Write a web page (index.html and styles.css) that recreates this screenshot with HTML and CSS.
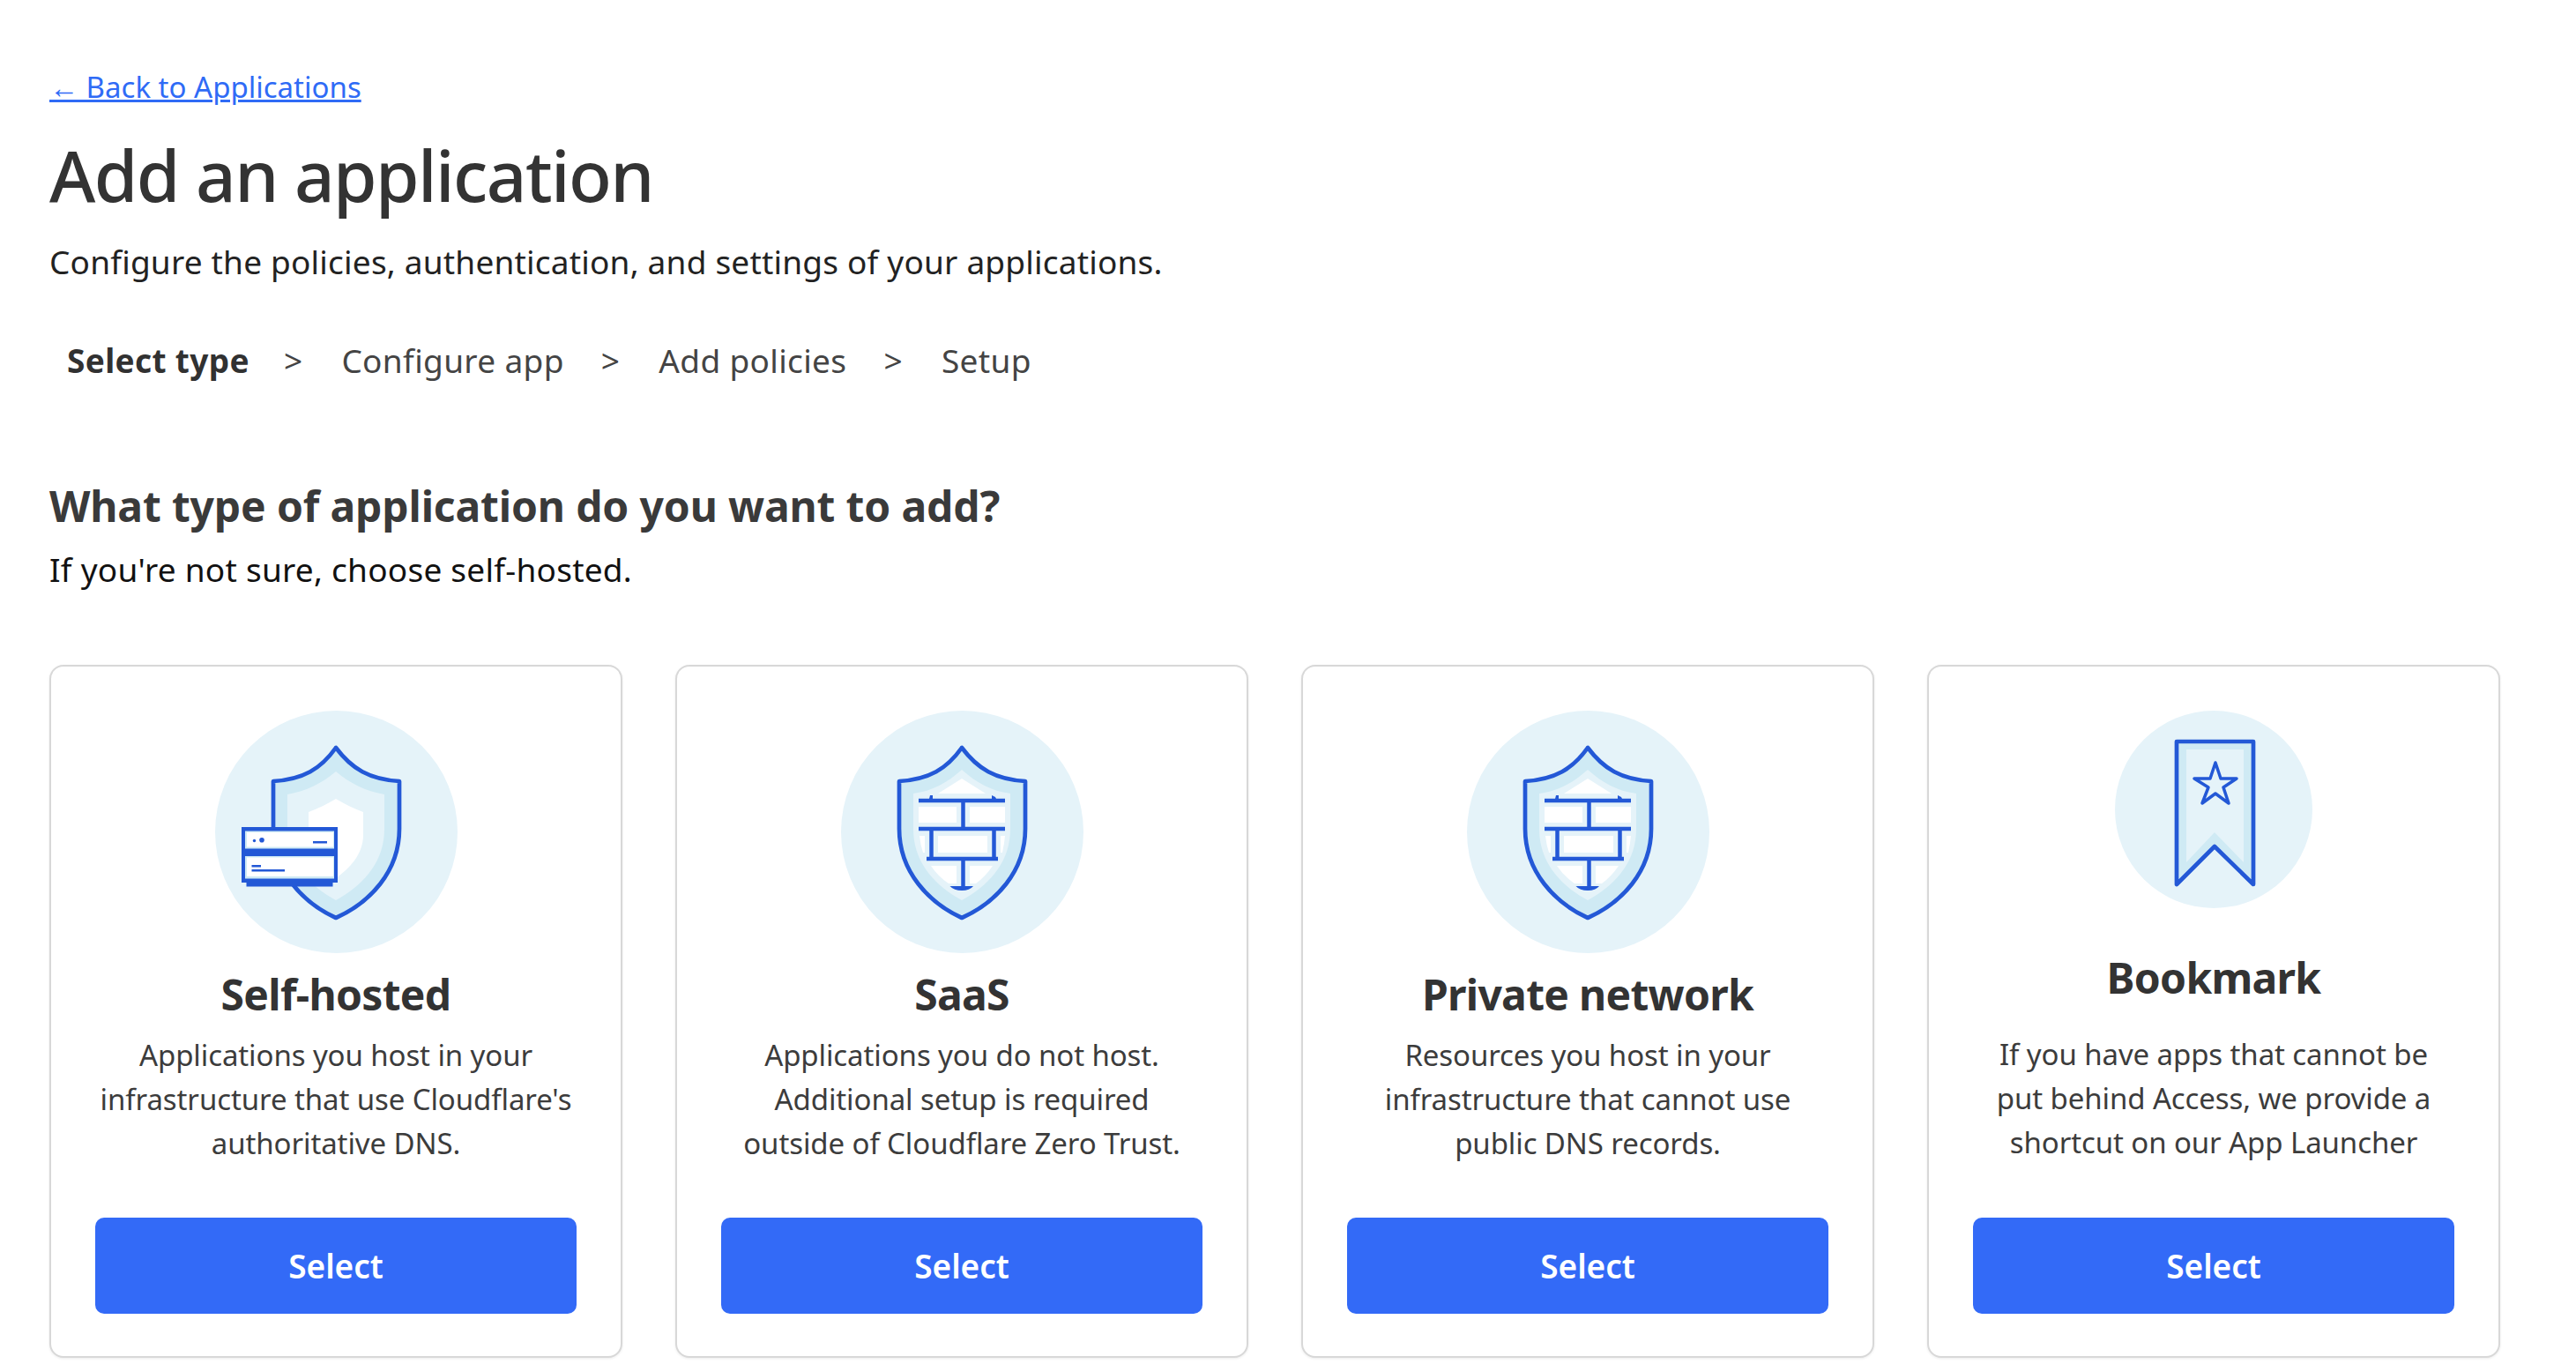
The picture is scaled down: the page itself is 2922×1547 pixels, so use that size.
FILE: index.html
```html
<!DOCTYPE html>
<html lang="en">
<head>
<meta charset="utf-8">
<title>Add an application</title>
<link rel="stylesheet" href="styles.css">
</head>
<body>
<main class="page">
  <a class="back" href="#">← Back to Applications</a>
  <h1 class="title">Add an application</h1>
  <p class="lead">Configure the policies, authentication, and settings of your applications.</p>
  <nav class="steps">
    <span class="step step-active">Select type</span>
    <span class="sep">&gt;</span>
    <span class="step">Configure app</span>
    <span class="sep">&gt;</span>
    <span class="step">Add policies</span>
    <span class="sep">&gt;</span>
    <span class="step">Setup</span>
  </nav>
  <h2 class="question">What type of application do you want to add?</h2>
  <p class="hint">If you're not sure, choose self-hosted.</p>
  <section class="cards">
    <article class="card">
      <svg class="icon" viewBox="0 0 275 275" aria-hidden="true">
        <circle class="c-bg" cx="137.5" cy="137.5" r="137.5"/>
        <path class="c-band c-line" d="M137 42C120 66 100 78 66 80V134C66 183 100 218 137 235C175 218 209 183 209 134V80C175 78 155 66 137 42Z"/>
        <path class="c-bg" d="M137 69C120 83 104 91 82 95V134C82 172 106 198 137 215C168 198 192 172 192 134V95C170 91 154 83 137 69Z"/>
        <path class="c-white" d="M137 100C127 106 117 111 106 115V141C106 162 120 178 137 190C154 178 168 162 168 141V115C157 111 147 106 137 100Z"/>
        <rect class="c-fill" x="30" y="132" width="109" height="63"/>
        <rect class="c-fill" x="35.5" y="195" width="98" height="4.5"/>
        <rect class="c-band" x="34" y="136.500" width="101" height="20"/>
        <rect class="c-band" x="34" y="165" width="101" height="25.500"/>
        <rect class="c-white" x="36" y="138" width="98" height="16.500"/>
        <rect class="c-white" x="36" y="166.500" width="98" height="21.500"/>
        <circle class="c-fill" cx="44.500" cy="147.500" r="1.700"/>
        <circle class="c-fill" cx="53" cy="146.800" r="2.800"/>
        <rect class="c-fill" x="111" y="148" width="16" height="2.500"/>
        <rect class="c-fill" x="41.500" y="175" width="10.500" height="2.500"/>
        <rect class="c-fill" x="41.500" y="180" width="37.500" height="2.500"/>
      </svg>
      <h3 class="card-title">Self-hosted</h3>
      <p class="card-text">Applications you host in your infrastructure that use Cloudflare's authoritative DNS.</p>
      <button class="select" type="button">Select</button>
    </article>
    <article class="card">
      <svg class="icon" viewBox="0 0 275 275" aria-hidden="true">
        <use href="#brick-shield"/>
      </svg>
      <h3 class="card-title">SaaS</h3>
      <p class="card-text">Applications you do not host. Additional setup is required outside of Cloudflare Zero Trust.</p>
      <button class="select" type="button">Select</button>
    </article>
    <article class="card">
      <svg class="icon" viewBox="0 0 275 275" aria-hidden="true">
        <use href="#brick-shield"/>
      </svg>
      <h3 class="card-title">Private network</h3>
      <p class="card-text">Resources you host in your infrastructure that cannot use public DNS records.</p>
      <button class="select" type="button">Select</button>
    </article>
    <article class="card">
      <svg class="icon icon-small" viewBox="0 0 224 224" aria-hidden="true">
        <circle class="c-bg" cx="112" cy="112" r="112"/>
        <path class="c-band c-line" d="M70 35H157V197L113 154L70 197Z"/>
        <path class="c-bg" d="M81 44H146V172L113 138L81 172Z"/>
        <path class="c-star" d="M114 59L120 77H138L123 87L129 105L114 94L99 105L106 87L90 77H108Z"/>
      </svg>
      <h3 class="card-title card-title-small">Bookmark</h3>
      <p class="card-text">If you have apps that cannot be put behind Access, we provide a shortcut on our App Launcher</p>
      <button class="select" type="button">Select</button>
    </article>
  </section>
</main>
<svg class="defs" width="0" height="0" aria-hidden="true">
  <defs>
    <g id="brick-shield">
      <circle class="c-bg" cx="137.5" cy="137.5" r="137.5"/>
      <path class="c-band c-line" d="M137 42C120 66 100 78 66 80V134C66 183 100 218 137 235C175 218 209 183 209 134V80C175 78 155 66 137 42Z"/>
      <path class="c-bg" d="M137 67C120 82 104 91 82 94V134C82 172 106 198 137 215C168 198 192 172 192 134V94C170 91 154 82 137 67Z"/>
      <path class="c-white" d="M137 77L110 94H164Z"/>
      <rect class="c-white" x="88" y="109" width="43" height="18"/>
      <rect class="c-white" x="146" y="109" width="40" height="18"/>
      <rect class="c-white" x="110" y="142" width="56" height="19"/>
      <path class="c-white" d="M89 142H95V161H93Q90 152 89 142Z"/>
      <path class="c-white" d="M181 142H186Q185 152 183 161H181Z"/>
      <path class="c-white" d="M102 176H131V196H122Q110 188 102 176Z"/>
      <path class="c-white" d="M146 176H172Q164 188 153 196H146Z"/>
      <path class="c-thin" d="M88 102H186M138.500 102V134M88 134H186M102.500 134V168M173.500 134V168M97 168H178M138.500 168V201"/>
      <path class="c-fill" d="M123.500 199H150Q146 204 137 204Q128 204 123.500 199Z"/>
      <path class="c-fill" d="M100 100L101 96H104V100ZM171 100V96L175 98L176 100Z"/>
    </g>
  </defs>
</svg>
</body>
</html>
```
FILE: styles.css
```css
* { box-sizing: border-box; }
html, body { margin: 0; background: #fff; }
body { font-family: "Noto Sans", "Open Sans", sans-serif; color: #313131; overflow: hidden; }
.page { padding: 76px 86px 0 56px; height: 1547px; }
.back { display: block; width: max-content; color: #2f6bf6; font-size: 33px; line-height: 46px; letter-spacing: 0; }
.title { margin: 21px 0 0; font-size: 80px; line-height: 110px; font-weight: 500; color: #333; letter-spacing: -1.6px; }
.lead { margin: 19px 0 0; font-size: 37px; line-height: 50px; color: #222; letter-spacing: 0.2px; }
.steps { display: flex; align-items: center; margin: 62px 0 0; padding-left: 20px; font-size: 37px; line-height: 50px; letter-spacing: 0.35px; color: #444; }
.step { display: block; }
.step-active { font-weight: 700; color: #313131; margin-right: -3px; }
.sep { margin: 0 44px 0 42px; }
.question { margin: 107px 0 0; font-size: 48px; line-height: 66px; font-weight: 700; color: #3a3a3a; letter-spacing: -0.15px; }
.hint { margin: 14px 0 0; font-size: 37px; line-height: 50px; color: #111; letter-spacing: 0.25px; }
.cards { display: grid; grid-template-columns: repeat(4, 650px); column-gap: 60px; margin-top: 83px; }
.card { height: 786px; display: flex; flex-direction: column; align-items: center; padding: 50px 51px 0; border: 2px solid #d8d8d8; border-radius: 16px; background: #fff; box-shadow: 0 1px 3px rgba(0,0,0,.08); }
.icon { display: block; flex: none; width: 275px; height: 275px; }
.icon-small { width: 224px; height: 224px; }
.card-title { margin: 14px 0 0; font-size: 48px; line-height: 66px; font-weight: 700; color: #333; letter-spacing: -0.7px; }
.card-title-small { margin-top: 46px; }
.card-text { margin: 11px 0 0; text-align: center; font-size: 33px; line-height: 50px; color: #3c3c3c; letter-spacing: -0.1px; }
.card-title-small + .card-text { margin-top: 29px; }
.select { width: 546px; height: 109px; margin-top: auto; margin-bottom: 48px; border: 0; border-radius: 10px; background: #336af7; color: #fff; font: 600 37px/50px "Noto Sans", "Open Sans", sans-serif; letter-spacing: 0; }
.defs { position: absolute; }
.c-bg { fill: #e5f3f9; }
.c-band { fill: #cfeaf4; }
.c-white { fill: #fff; }
.c-fill { fill: #2358d6; }
.c-line { stroke: #2358d6; stroke-width: 4.7; stroke-linejoin: round; }
.c-thin { fill: none; stroke: #2358d6; stroke-width: 4.5; }
.c-star { fill: none; stroke: #2358d6; stroke-width: 3.5; stroke-linejoin: round; }
```
